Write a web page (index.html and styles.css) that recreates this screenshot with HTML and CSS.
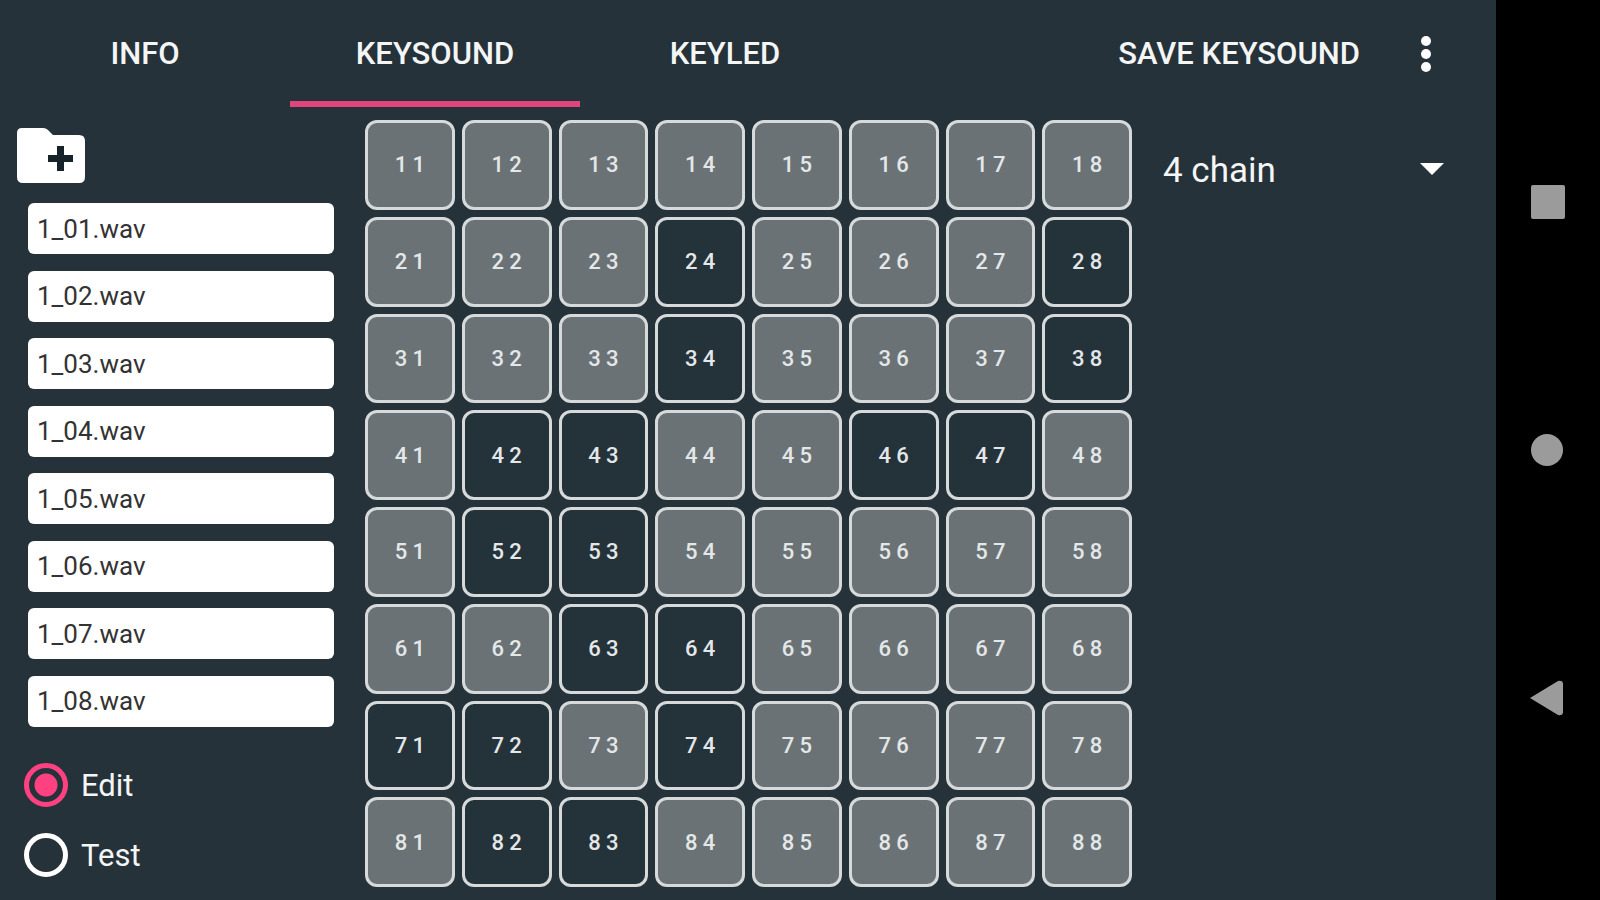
FILE: index.html
```html
<!doctype html>
<html lang="en">
<head>
<meta charset="utf-8">
<meta name="viewport" content="width=device-width, initial-scale=1">
<title>Keysound</title>
<link rel="stylesheet" href="styles.css">
</head>
<body>

<div class="app">
    <header class="bar">
        <nav class="tabs">
            <button class="tab">INFO</button>
            <button class="tab active">KEYSOUND</button>
            <button class="tab">KEYLED</button>
        </nav>
        <button class="save">SAVE KEYSOUND</button>
        <button class="more" aria-label="More">
            <svg width="12" height="38" viewBox="0 0 12 38"><g fill="#fff"><circle cx="6" cy="6" r="5"/><circle cx="6" cy="19" r="5"/><circle cx="6" cy="32" r="5"/></g></svg>
        </button>
    </header>

    <main class="main">
        <div class="side">
            <button class="add" aria-label="Add folder">
                <svg width="68" height="55" viewBox="0 0 68 55">
                    <path fill="#fff" d="M5 0H26Q29 0 31 2L36 7H62Q68 7 68 13V49Q68 55 62 55H6Q0 55 0 49V5Q0 0 5 0Z"/>
                    <path fill="#16232a" d="M40 18h7v9h9v7h-9v9h-7v-9h-9v-7h9z"/>
                </svg>
            </button>
            <div class="files">
                <button class="file">1_01.wav</button>
                <button class="file">1_02.wav</button>
                <button class="file">1_03.wav</button>
                <button class="file">1_04.wav</button>
                <button class="file">1_05.wav</button>
                <button class="file">1_06.wav</button>
                <button class="file">1_07.wav</button>
                <button class="file">1_08.wav</button>
            </div>
            <div class="modes">
                <label class="mode"><input type="radio" name="mode" checked>Edit</label>
                <label class="mode"><input type="radio" name="mode">Test</label>
            </div>
        </div>

        <div class="pads">
            <button class="pad">1 1</button>
            <button class="pad">1 2</button>
            <button class="pad">1 3</button>
            <button class="pad">1 4</button>
            <button class="pad">1 5</button>
            <button class="pad">1 6</button>
            <button class="pad">1 7</button>
            <button class="pad">1 8</button>

            <button class="pad">2 1</button>
            <button class="pad">2 2</button>
            <button class="pad">2 3</button>
            <button class="pad empty">2 4</button>
            <button class="pad">2 5</button>
            <button class="pad">2 6</button>
            <button class="pad">2 7</button>
            <button class="pad empty">2 8</button>

            <button class="pad">3 1</button>
            <button class="pad">3 2</button>
            <button class="pad">3 3</button>
            <button class="pad empty">3 4</button>
            <button class="pad">3 5</button>
            <button class="pad">3 6</button>
            <button class="pad">3 7</button>
            <button class="pad empty">3 8</button>

            <button class="pad">4 1</button>
            <button class="pad empty">4 2</button>
            <button class="pad empty">4 3</button>
            <button class="pad">4 4</button>
            <button class="pad">4 5</button>
            <button class="pad empty">4 6</button>
            <button class="pad empty">4 7</button>
            <button class="pad">4 8</button>

            <button class="pad">5 1</button>
            <button class="pad empty">5 2</button>
            <button class="pad empty">5 3</button>
            <button class="pad">5 4</button>
            <button class="pad">5 5</button>
            <button class="pad">5 6</button>
            <button class="pad">5 7</button>
            <button class="pad">5 8</button>

            <button class="pad">6 1</button>
            <button class="pad">6 2</button>
            <button class="pad empty">6 3</button>
            <button class="pad empty">6 4</button>
            <button class="pad">6 5</button>
            <button class="pad">6 6</button>
            <button class="pad">6 7</button>
            <button class="pad">6 8</button>

            <button class="pad empty">7 1</button>
            <button class="pad empty">7 2</button>
            <button class="pad">7 3</button>
            <button class="pad empty">7 4</button>
            <button class="pad">7 5</button>
            <button class="pad">7 6</button>
            <button class="pad">7 7</button>
            <button class="pad">7 8</button>

            <button class="pad">8 1</button>
            <button class="pad empty">8 2</button>
            <button class="pad empty">8 3</button>
            <button class="pad">8 4</button>
            <button class="pad">8 5</button>
            <button class="pad">8 6</button>
            <button class="pad">8 7</button>
            <button class="pad">8 8</button>
        </div>

        <div class="chain">
            <select aria-label="Chain">
                <option>4 chain</option>
            </select>
        </div>
    </main>
</div>

<nav class="sysnav">
    <button aria-label="Recent"><svg width="36" height="36" viewBox="0 0 36 36"><rect x="1" y="1" width="34" height="34" rx="2" fill="#9b9b9b"/></svg></button>
    <button aria-label="Home"><svg width="36" height="36" viewBox="0 0 36 36"><circle cx="17" cy="18" r="16" fill="#9b9b9b"/></svg></button>
    <button aria-label="Back"><svg width="36" height="36" viewBox="0 0 36 36"><path d="M0 18 28 1Q32 0 33 3V33Q32 36 28 35Z" fill="#9b9b9b"/></svg></button>
</nav>

</body>
</html>
```
FILE: styles.css
```css
*{
    box-sizing: border-box;
}
body{
    margin: 0;
    display: flex;
    min-height: 100vh;
    background-color: #263239;
    color: #f4f6f6;
    font-family: Roboto, "Liberation Sans", sans-serif;
    font-size: 31px;
}
button{
    margin: 0;
    padding: 0;
    border: 0;
    background: none;
    color: inherit;
    font: inherit;
    cursor: pointer;
}
svg{
    display: block;
}
.app{
    display: flex;
    flex: 1;
    flex-direction: column;
}

/* top bar */
.bar{
    display: flex;
    height: 107px;
    padding-right: 64px;
    font-weight: 500;
}
.tabs{
    display: flex;
    flex: 1;
}
.tab{
    width: 290px;
    padding-top: 6px;
    border-bottom: 6px solid transparent;
}
.tab.active{
    border-color: #e2447c;
}
.save{
    margin-right: 60px;
}
.more{
    width: 12px;
}

/* content */
.main{
    display: grid;
    flex: 1;
    grid-template-columns: 365px 1fr 364px;
    padding: 13px 0 10px;
}
.side{
    display: flex;
    flex-direction: column;
    padding-top: 8px;
}
.add{
    align-self: flex-start;
    margin-left: 17px;
}
.files{
    display: flex;
    flex: 1;
    flex-direction: column;
    justify-content: space-between;
    padding: 20px 31px 23px 28px;
}
.file{
    height: 51px;
    padding-left: 9px;
    border-radius: 6px;
    background-color: #fff;
    color: #333;
    font-size: 26px;
    text-align: left;
}
.modes{
    padding-left: 24px;
}
.mode{
    display: flex;
    align-items: center;
    gap: 13px;
    height: 70px;
}
.mode input{
    appearance: none;
    width: 44px;
    height: 44px;
    margin: 0;
    border: 5px solid #fff;
    border-radius: 50%;
}
.mode input:checked{
    border-color: #ff4081;
    background: radial-gradient(circle, #ff4081 11px, transparent 12px);
}

/* pads */
.pads{
    display: grid;
    grid-template-columns: repeat(8, 1fr);
    gap: 7px;
    align-self: start;
}
.pad{
    aspect-ratio: 1;
    border: 3px solid #d6dadb;
    border-radius: 12px;
    background-color: #6a7276;
    color: #e4e7e8;
    font-size: 22px;
    font-weight: 500;
}
.pad.empty{
    background-color: #24323a;
}

.chain{
    position: relative;
    padding: 20px 52px 0 31px;
}
.chain select{
    appearance: none;
    width: 100%;
    height: 60px;
    padding: 0;
    border: 0;
    background: none;
    color: inherit;
    font: inherit;
    font-size: 35px;
}
.chain select option{
    background-color: #263239;
}
.chain::after{
    content: "";
    position: absolute;
    top: 43px;
    right: 52px;
    border: 12px solid transparent;
    border-top-color: #fff;
    border-bottom: 0;
    pointer-events: none;
}

/* android navigation */
.sysnav{
    display: flex;
    flex-direction: column;
    align-items: center;
    justify-content: center;
    gap: 212px;
    width: 104px;
    background-color: #000;
}
```
